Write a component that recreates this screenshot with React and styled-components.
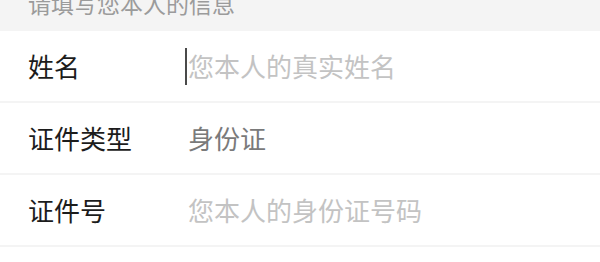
import styled, { createGlobalStyle } from "styled-components";

const GlobalStyle = createGlobalStyle`
  html, body {
    margin: 0;
    padding: 0;
    background: #f4f4f4;
  }
  body {
    font-family: "Noto Sans CJK SC", "Noto Sans", sans-serif;
  }
`;

const Page = styled.div`
  width: 600px;
  height: 262px;
  overflow: hidden;
  background: #f4f4f4;
`;

const Header = styled.div`
  height: 31px;
  overflow: hidden;
  padding-left: 28px;
`;

const HeaderText = styled.div`
  margin-top: -8px;
  font-size: 23px;
  line-height: 23px;
  color: #9b9b9b;
`;

const List = styled.div`
  display: flex;
  flex-direction: column;
  gap: 2px;
`;

const Row = styled.div`
  display: flex;
  align-items: center;
  height: 70px;
  padding-left: 28px;
  background: #fff;
  font-size: 26px;
`;

const Label = styled.div`
  width: 160px;
  flex-shrink: 0;
  color: #1c1c1c;
  line-height: 1;
`;

const Value = styled.div`
  display: flex;
  align-items: center;
  line-height: 1;
  color: ${(p) => (p.$placeholder ? "#c3c3c3" : "#7a7a7a")};
`;

const Caret = styled.span`
  width: 2px;
  height: 37px;
  margin-left: -3px;
  margin-right: 1px;
  background: #4a4a4a;
`;

const fields = [
  { label: "姓名", value: "您本人的真实姓名", placeholder: true, focused: true },
  { label: "证件类型", value: "身份证" },
  { label: "证件号", value: "您本人的身份证号码", placeholder: true },
  { label: "", value: "" },
];

export default function App() {
  return (
    <Page>
      <GlobalStyle />
      <Header>
        <HeaderText>请填写您本人的信息</HeaderText>
      </Header>
      <List>
        {fields.map((f, i) => (
          <Row key={i}>
            <Label>{f.label}</Label>
            <Value $placeholder={f.placeholder}>
              {f.focused && <Caret />}
              {f.value}
            </Value>
          </Row>
        ))}
      </List>
    </Page>
  );
}
